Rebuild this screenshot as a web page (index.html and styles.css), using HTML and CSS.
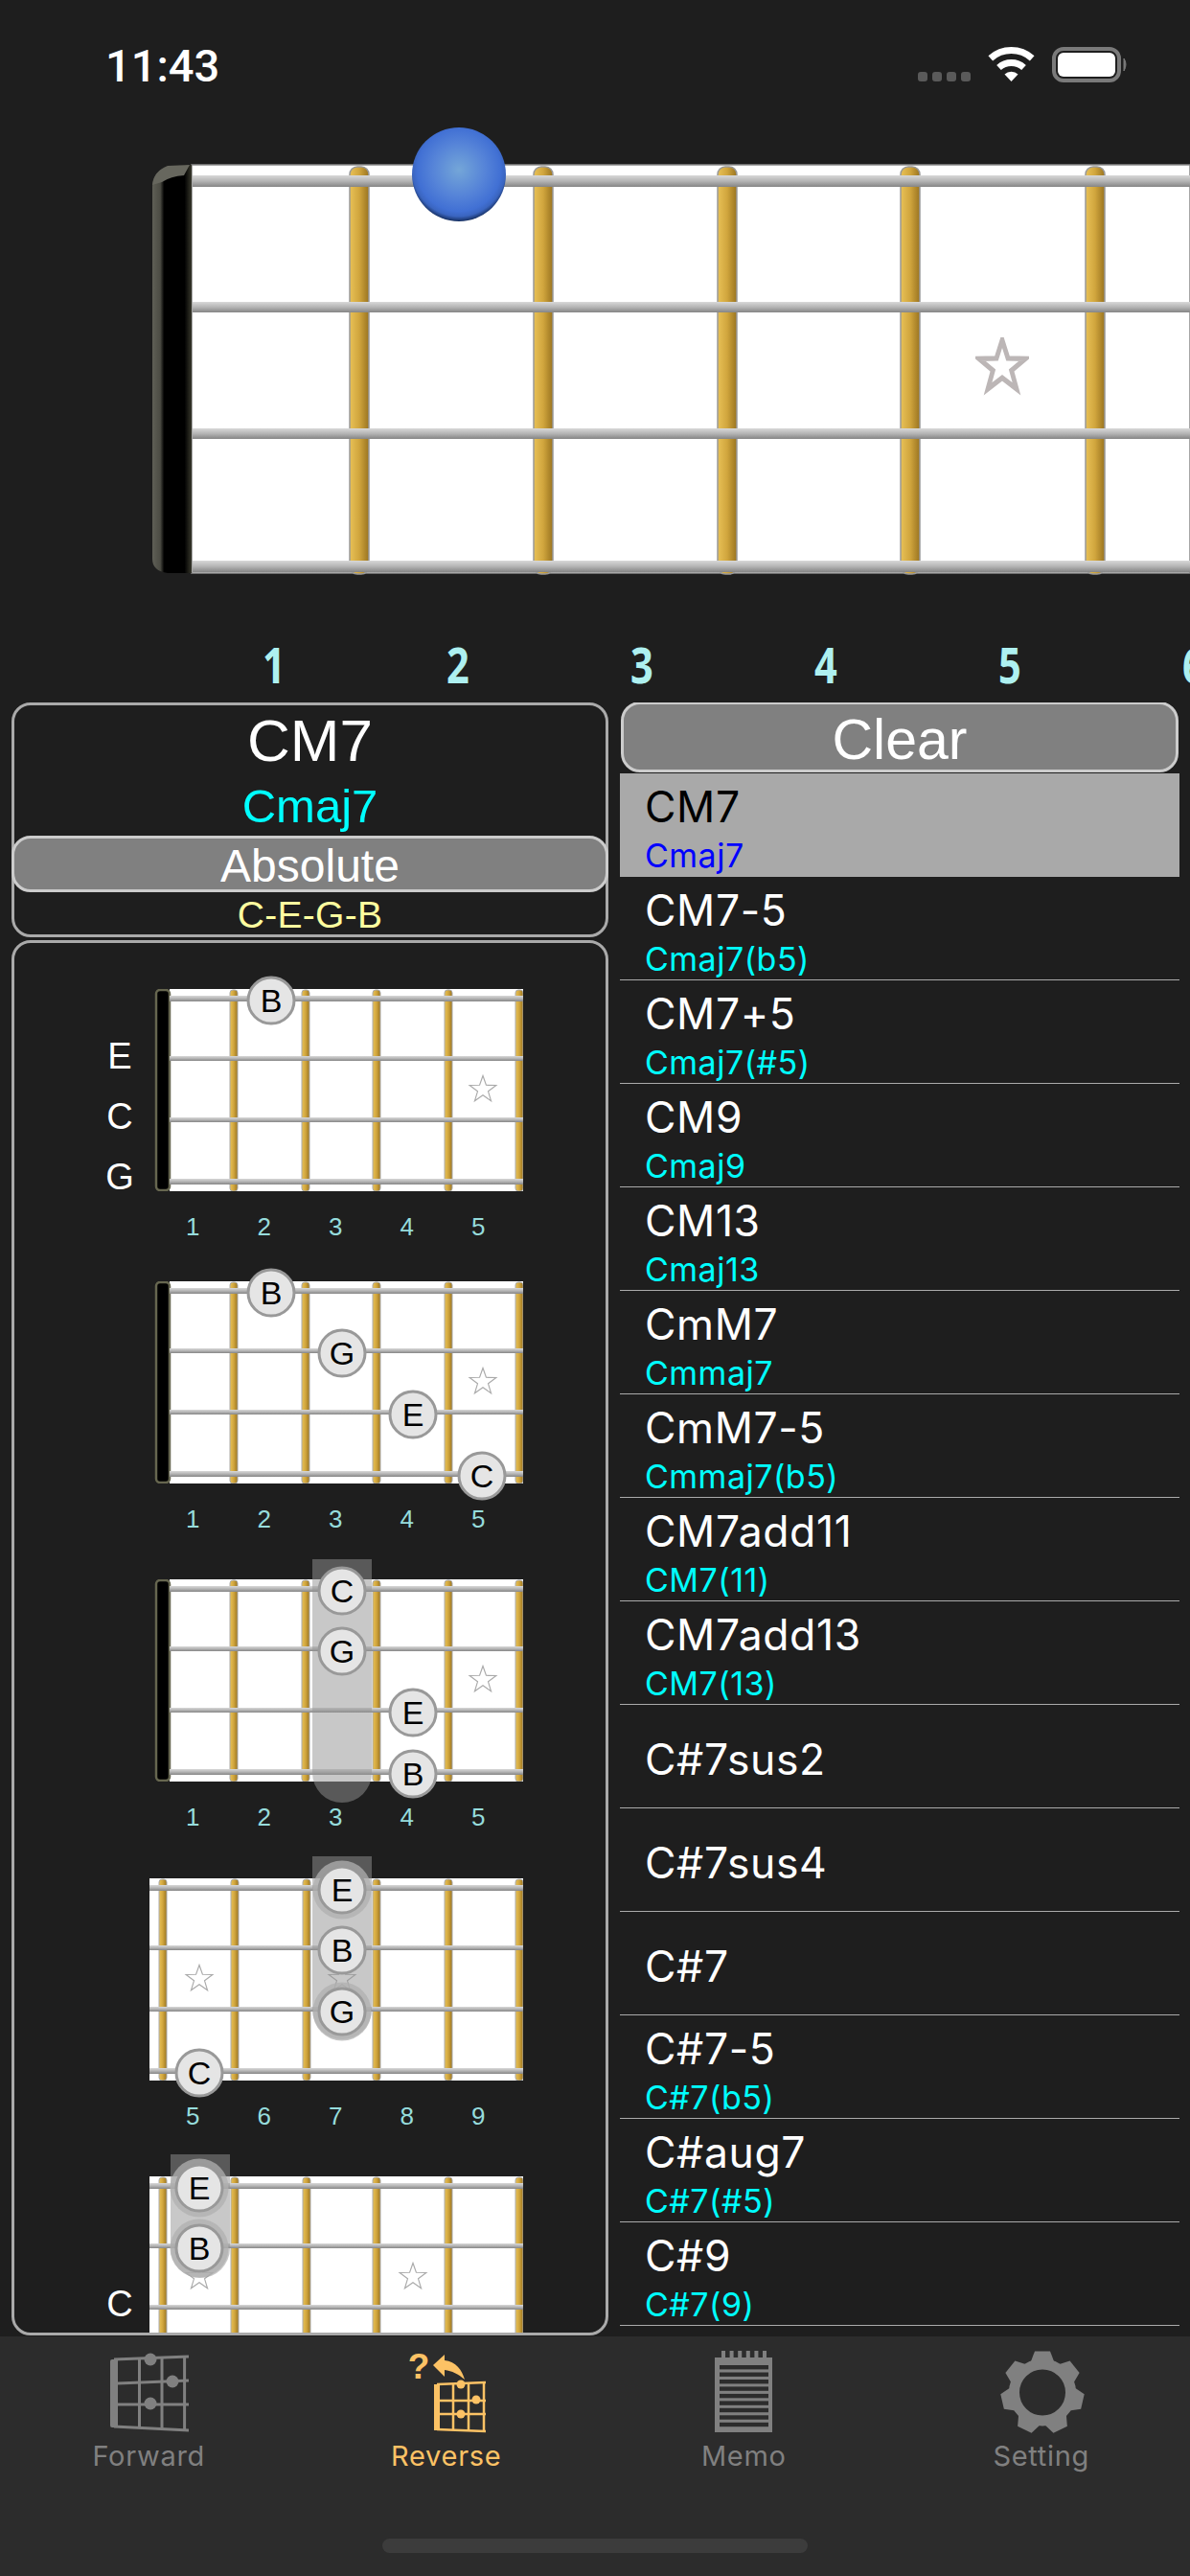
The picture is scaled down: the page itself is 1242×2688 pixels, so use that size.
FILE: index.html
```html
<!DOCTYPE html>
<html lang="en">
<head>
<meta charset="utf-8">
<title>Reverse chord lookup</title>
<link rel="stylesheet" href="styles.css">
</head>
<body>
<svg class="defs" aria-hidden="true">
  <defs>
    <linearGradient id="fretG" x1="0" x2="1" y1="0" y2="0">
      <stop offset="0" stop-color="#e8c157"/><stop offset=".5" stop-color="#d0a53d"/><stop offset="1" stop-color="#9a7420"/>
    </linearGradient>
    <linearGradient id="stringG" x1="0" x2="0" y1="0" y2="1">
      <stop offset="0" stop-color="#d8d8d8"/><stop offset=".5" stop-color="#b4b4b4"/><stop offset="1" stop-color="#858585"/>
    </linearGradient>
    <linearGradient id="nutG" x1="0" x2="1" y1="0" y2="0">
      <stop offset="0" stop-color="#5f5f56"/><stop offset=".2" stop-color="#4c4c44"/><stop offset=".3" stop-color="#000"/><stop offset=".82" stop-color="#000"/><stop offset="1" stop-color="#38382c"/>
    </linearGradient>
    <radialGradient id="ballG" cx=".5" cy=".45" r=".57">
      <stop offset="0" stop-color="#74a6d8"/><stop offset=".5" stop-color="#5583d8"/><stop offset=".78" stop-color="#4170d4"/><stop offset=".87" stop-color="#3a65c0"/><stop offset="1" stop-color="#081a3c"/>
    </radialGradient>
    <symbol id="star" viewBox="-11 -11 22 22" preserveAspectRatio="none">
      <polygon points="0,-10 2.35,-3.24 9.51,-3.09 3.8,1.24 5.88,8.09 0,4 -5.88,8.09 -3.8,1.24 -9.51,-3.09 -2.35,-3.24"/>
    </symbol>
    <symbol id="board-nut" viewBox="0 0 390 211">
      <rect x="21" y="0" width="369" height="211" fill="#fff"/>
      <rect x="7" y="1" width="14" height="209" rx="4" fill="#000" stroke="#66664f" stroke-width="2.5"/>
      <g fill="url(#fretG)" stroke="#aaa" stroke-width="1">
        <rect x="84" y="1" width="8" height="210" rx="3"/>
        <rect x="159" y="1" width="8" height="210" rx="3"/>
        <rect x="233" y="1" width="8" height="210" rx="3"/>
        <rect x="308" y="1" width="8" height="210" rx="3"/>
        <rect x="382" y="1" width="8" height="210" rx="3"/>
      </g>
      <g fill="url(#stringG)">
        <rect x="21" y="7" width="369" height="6"/>
        <rect x="21" y="70" width="369" height="5"/>
        <rect x="21" y="134" width="369" height="5"/>
        <rect x="21" y="198" width="369" height="6"/>
      </g>
    </symbol>
    <symbol id="board-open" viewBox="0 0 390 211">
      <rect x="0" y="0" width="390" height="211" fill="#fff"/>
      <g fill="url(#fretG)" stroke="#aaa" stroke-width="1">
        <rect x="10" y="1" width="8" height="210" rx="3"/>
        <rect x="85" y="1" width="8" height="210" rx="3"/>
        <rect x="160" y="1" width="8" height="210" rx="3"/>
        <rect x="233" y="1" width="8" height="210" rx="3"/>
        <rect x="308" y="1" width="8" height="210" rx="3"/>
        <rect x="382" y="1" width="8" height="210" rx="3"/>
      </g>
      <g fill="url(#stringG)">
        <rect x="0" y="7" width="390" height="6"/>
        <rect x="0" y="70" width="390" height="5"/>
        <rect x="0" y="134" width="390" height="5"/>
        <rect x="0" y="198" width="390" height="6"/>
      </g>
    </symbol>
  </defs>
</svg>

<div class="app">
  <header class="status">
    <span class="time">11:43</span>
    <svg class="status-icons" viewBox="950 45 230 45" width="230" height="45" aria-hidden="true">
      <g fill="#5a5a5a">
        <rect x="958" y="75" width="10" height="10" rx="3"/>
        <rect x="973" y="75" width="10" height="10" rx="3"/>
        <rect x="988" y="75" width="10" height="10" rx="3"/>
        <rect x="1003" y="75" width="10" height="10" rx="3"/>
      </g>
      <g transform="translate(1055.5 85)">
        <g fill="none" stroke="#fff" stroke-width="7">
          <path d="M-21.7 -24.1A32.5 32.5 0 0 1 21.7 -24.1"/>
          <path d="M-13 -14.5A19.5 19.5 0 0 1 13 -14.5"/>
        </g>
        <path d="M0 0L-7 -7.5A10 10 0 0 1 7 -7.5Z" fill="#fff"/>
      </g>
      <rect x="1100" y="51" width="68" height="33" rx="10" fill="none" stroke="#7a7a7a" stroke-width="4"/>
      <rect x="1104" y="55" width="60" height="25" rx="6" fill="#fff"/>
      <path d="M1173 61Q1177 67 1173 74Z" fill="#7a7a7a" stroke="#7a7a7a" stroke-width="1"/>
    </svg>
  </header>

  <svg class="neck" viewBox="0 0 1242 477" width="1242" height="477" aria-hidden="true">
    <rect x="200" y="39" width="1042" height="426" fill="#fff" stroke="#8a8a8a" stroke-width="1.5"/>
    <path d="M159 62Q159 46 175 41L200 39L200 465L175 465Q159 463 159 450Z" fill="url(#nutG)"/>
    <path d="M159 60Q161 45 175 40L198 39L192 50Q178 51 169 57Z" fill="#67675e"/>
    <g fill="url(#fretG)" stroke="#999" stroke-width="1.5">
      <rect x="365" y="41" width="20" height="425" rx="8"/>
      <rect x="557" y="41" width="20" height="425" rx="8"/>
      <rect x="749" y="41" width="20" height="425" rx="8"/>
      <rect x="940" y="41" width="20" height="425" rx="8"/>
      <rect x="1133" y="41" width="20" height="425" rx="8"/>
    </g>
    <g fill="url(#stringG)">
      <rect x="201" y="50" width="1041" height="12"/>
      <rect x="201" y="182" width="1041" height="11"/>
      <rect x="201" y="314" width="1041" height="11"/>
      <rect x="201" y="452" width="1041" height="12"/>
    </g>
    <circle cx="479" cy="49" r="49" fill="url(#ballG)"/>
    <use href="#star" class="big-star" x="1018" y="219" width="56" height="62"/>
  </svg>

  <div class="big-frets">
    <span class="big-fret"><span>1</span></span>
    <span class="big-fret"><span>2</span></span>
    <span class="big-fret"><span>3</span></span>
    <span class="big-fret"><span>4</span></span>
    <span class="big-fret"><span>5</span></span>
    <span class="big-fret"><span>6</span></span>
  </div>

  <main class="main">
    <section class="left">
      <div class="info">
        <div class="info-name">CM7</div>
        <div class="info-alt">Cmaj7</div>
        <div class="info-mode">Absolute</div>
        <div class="info-notes">C-E-G-B</div>
      </div>
      <div class="chords">

        <div class="chord chord-a">
          <div class="chord-row">
            <div class="tuning"><span>E</span><span>C</span><span>G</span></div>
            <div class="board">
              <svg class="board-art"><use href="#board-nut"/></svg>
              <svg class="star c5"><use href="#star"/></svg>
              <span class="dot c2 r1">B</span>
            </div>
          </div>
          <div class="nums"><span>1</span><span>2</span><span>3</span><span>4</span><span>5</span></div>
        </div>

        <div class="chord">
          <div class="chord-row">
            <div class="tuning"></div>
            <div class="board">
              <svg class="board-art"><use href="#board-nut"/></svg>
              <svg class="star c5"><use href="#star"/></svg>
              <span class="dot c2 r1">B</span>
              <span class="dot c3 r2">G</span>
              <span class="dot c4 r3">E</span>
              <span class="dot c5 r4">C</span>
            </div>
          </div>
          <div class="nums"><span>1</span><span>2</span><span>3</span><span>4</span><span>5</span></div>
        </div>

        <div class="chord chord-c">
          <div class="chord-row">
            <div class="tuning"></div>
            <div class="board">
              <svg class="board-art"><use href="#board-nut"/></svg>
              <svg class="star c5"><use href="#star"/></svg>
              <div class="barre barre-long c3-barre"></div>
              <span class="dot c3 r1">C</span>
              <span class="dot c3 r2">G</span>
              <span class="dot c4 r3">E</span>
              <span class="dot c4 r4">B</span>
            </div>
          </div>
          <div class="nums"><span>1</span><span>2</span><span>3</span><span>4</span><span>5</span></div>
        </div>

        <div class="chord">
          <div class="chord-row">
            <div class="tuning"></div>
            <div class="board">
              <svg class="board-art"><use href="#board-open"/></svg>
              <svg class="star c1"><use href="#star"/></svg>
              <svg class="star c3"><use href="#star"/></svg>
              <div class="barre barre-mid c3-barre"></div>
              <span class="dot halo c3 r1">E</span>
              <span class="dot c3 r2">B</span>
              <span class="dot halo c3 r3">G</span>
              <span class="dot c1 r4">C</span>
            </div>
          </div>
          <div class="nums"><span>5</span><span>6</span><span>7</span><span>8</span><span>9</span></div>
        </div>

        <div class="chord">
          <div class="chord-row">
            <div class="tuning"><span></span><span>C</span></div>
            <div class="board">
              <svg class="board-art"><use href="#board-open"/></svg>
              <svg class="star c1"><use href="#star"/></svg>
              <svg class="star c4"><use href="#star"/></svg>
              <div class="barre barre-short c1-barre"></div>
              <span class="dot halo c1 r1">E</span>
              <span class="dot halo c1 r2">B</span>
            </div>
          </div>
        </div>

      </div>
    </section>

    <section class="right">
      <button class="clear" type="button">Clear</button>
      <ul class="list">
        <li class="row selected"><span class="name">CM7</span><span class="alt">Cmaj7</span></li>
        <li class="row"><span class="name">CM7-5</span><span class="alt">Cmaj7(b5)</span></li>
        <li class="row"><span class="name">CM7+5</span><span class="alt">Cmaj7(#5)</span></li>
        <li class="row"><span class="name">CM9</span><span class="alt">Cmaj9</span></li>
        <li class="row"><span class="name">CM13</span><span class="alt">Cmaj13</span></li>
        <li class="row"><span class="name">CmM7</span><span class="alt">Cmmaj7</span></li>
        <li class="row"><span class="name">CmM7-5</span><span class="alt">Cmmaj7(b5)</span></li>
        <li class="row"><span class="name">CM7add11</span><span class="alt">CM7(11)</span></li>
        <li class="row"><span class="name">CM7add13</span><span class="alt">CM7(13)</span></li>
        <li class="row single"><span class="name">C#7sus2</span></li>
        <li class="row single"><span class="name">C#7sus4</span></li>
        <li class="row single"><span class="name">C#7</span></li>
        <li class="row"><span class="name">C#7-5</span><span class="alt">C#7(b5)</span></li>
        <li class="row"><span class="name">C#aug7</span><span class="alt">C#7(#5)</span></li>
        <li class="row"><span class="name">C#9</span><span class="alt">C#7(9)</span></li>
      </ul>
    </section>
  </main>

  <nav class="tabbar">
    <div class="tab">
      <svg class="tab-icon" viewBox="0 0 100 87" width="100" height="87" aria-hidden="true">
        <g fill="none" stroke="currentColor" stroke-width="3">
          <path d="M14 9L92 6M18 34L92 31M18 56L92 56M14 79L92 83"/>
          <path d="M40.5 8V81M64 7V82M87.6 6V83"/>
        </g>
        <path d="M10 11Q10 9 12 9H18V80H12Q10 80 10 78Z" fill="currentColor"/>
        <circle cx="52" cy="9" r="6.5" fill="currentColor"/>
        <circle cx="75" cy="32" r="6.5" fill="currentColor"/>
        <circle cx="52" cy="55" r="6.5" fill="currentColor"/>
      </svg>
      <span class="tab-label">Forward</span>
    </div>
    <div class="tab active">
      <svg class="tab-icon" viewBox="0 0 100 87" width="100" height="87" aria-hidden="true">
        <text class="q-mark" x="21" y="29">?</text>
        <path d="M36 15L48 4L48 10C60 11 66 20 69 30C62 24 56 21 48 20L48 27Z" fill="currentColor"/>
        <g fill="none" stroke="currentColor" stroke-width="2.5">
          <path d="M40 35L91 33M43 52L91 52M43 66L91 66M40 82L91 84"/>
          <path d="M57 34V83M73 34V83M89 33V84"/>
        </g>
        <rect x="37" y="35" width="6" height="48" fill="currentColor"/>
        <circle cx="65" cy="35" r="4.5" fill="currentColor"/>
        <circle cx="81" cy="51" r="4.5" fill="currentColor"/>
        <circle cx="65" cy="66" r="4.5" fill="currentColor"/>
      </svg>
      <span class="tab-label">Reverse</span>
    </div>
    <div class="tab">
      <svg class="tab-icon" viewBox="0 0 100 87" width="100" height="87" aria-hidden="true">
        <g fill="currentColor">
          <rect x="20" y="7" width="60" height="78"/>
          <rect x="27" y="0" width="4" height="8"/><rect x="35.6" y="0" width="4" height="8"/><rect x="44.2" y="0" width="4" height="8"/>
          <rect x="52.8" y="0" width="4" height="8"/><rect x="61.4" y="0" width="4" height="8"/><rect x="70" y="0" width="4" height="8"/>
        </g>
        <g fill="#2c2c2c">
          <rect x="25" y="15" width="51" height="4.4"/><rect x="25" y="22.5" width="51" height="4.4"/><rect x="25" y="30" width="51" height="4.4"/>
          <rect x="25" y="37.4" width="51" height="4.4"/><rect x="25" y="44.9" width="51" height="4.4"/><rect x="25" y="52.4" width="51" height="4.4"/>
          <rect x="25" y="59.8" width="51" height="4.4"/><rect x="25" y="67.3" width="51" height="4.4"/><rect x="25" y="74.8" width="51" height="4.4"/>
        </g>
      </svg>
      <span class="tab-label">Memo</span>
    </div>
    <div class="tab">
      <svg class="tab-icon" viewBox="0 0 100 87" width="100" height="87" aria-hidden="true">
        <g transform="translate(51 43.5)" fill="currentColor">
          <circle r="29.5" fill="none" stroke="currentColor" stroke-width="11"/>
          <polygon points="-13,-30 -8,-43 8,-43 13,-30"/>
          <polygon points="-13,-30 -8,-43 8,-43 13,-30" transform="rotate(51.43)"/>
          <polygon points="-13,-30 -8,-43 8,-43 13,-30" transform="rotate(102.86)"/>
          <polygon points="-13,-30 -8,-43 8,-43 13,-30" transform="rotate(154.29)"/>
          <polygon points="-13,-30 -8,-43 8,-43 13,-30" transform="rotate(205.71)"/>
          <polygon points="-13,-30 -8,-43 8,-43 13,-30" transform="rotate(257.14)"/>
          <polygon points="-13,-30 -8,-43 8,-43 13,-30" transform="rotate(308.57)"/>
        </g>
      </svg>
      <span class="tab-label">Setting</span>
    </div>
    <div class="home-indicator"></div>
  </nav>
</div>
</body>
</html>
```

FILE: styles.css
```css
* { box-sizing: border-box; }

html, body {
  margin: 0;
  padding: 0;
  width: 1242px;
  height: 2688px;
  overflow: hidden;
  background: #1e1e1e;
  font-family: "Liberation Sans", Arial, sans-serif;
  color: #fff;
}

.defs { position: absolute; width: 0; height: 0; }

.app {
  display: flex;
  flex-direction: column;
  width: 1242px;
  height: 2688px;
  overflow: hidden;
}

/* Status bar */
.status {
  display: flex;
  align-items: flex-start;
  justify-content: space-between;
  height: 133px;
  flex: none;
}
.time {
  margin: 44px 0 0 110px;
  font-family: Roboto, sans-serif;
  font-size: 47px;
  font-weight: 500;
  line-height: 50px;
}
.status-icons { margin: 45px 62px 0 0; display: block; }

/* Large neck */
.neck { display: block; flex: none; }
.big-star { fill: #fff; stroke: #bcb6b6; stroke-width: 1.9; }

.big-frets {
  display: flex;
  flex: none;
  height: 123px;
  padding: 48px 0 0 190px;
  width: 1500px;
}
.big-fret {
  flex: none;
  width: 192px;
  height: 70px;
  text-align: center;
  font-family: "Open Sans", sans-serif;
  font-weight: 700;
  font-size: 52px;
  line-height: 70px;
  color: #aef0f0;
}
.big-fret span { display: inline-block; transform: scaleX(.8); }

/* Main two-column area */
.main {
  display: grid;
  grid-template-columns: 623px 584px;
  column-gap: 12px;
  padding-left: 12px;
  height: 1705px;
  flex: none;
  overflow: hidden;
}
.left { display: flex; flex-direction: column; gap: 3px; min-height: 0; }

.info {
  height: 245px;
  flex: none;
  border: 3px solid #aaa;
  border-radius: 20px;
  text-align: center;
}
.info-name { font-size: 62px; line-height: 74px; }
.info-alt { font-size: 49px; line-height: 62px; color: #0ff; }
.info-mode {
  margin: 0 -3px;
  height: 59px;
  border: 3px solid #ccc;
  border-radius: 20px;
  background: #808080;
  font-size: 48px;
  line-height: 57px;
}
.info-notes { padding-top: 4px; font-size: 39px; line-height: 40px; color: #ffff9f; letter-spacing: .3px; }

.chords {
  flex: none;
  height: 1456px;
  border: 3px solid #aaa;
  border-radius: 20px;
  padding-top: 48px;
  overflow: hidden;
}
.chord { height: 311px; }
.chord-a { height: 305px; }
.chord-c { height: 312px; }
.chord-row { display: flex; align-items: flex-start; }

.tuning {
  flex: none;
  width: 62px;
  height: 211px;
  margin-left: 79px;
  padding-top: 39px;
  text-align: center;
  font-size: 38px;
  line-height: 63px;
}
.tuning span { display: block; height: 63px; }

.board { position: relative; flex: none; width: 390px; height: 211px; }
.board-art { display: block; width: 390px; height: 211px; overflow: visible; }

.star {
  position: absolute;
  top: 105px;
  width: 32px;
  height: 32px;
  transform: translate(-50%, -50%);
  fill: #fff;
  stroke: #aaa;
  stroke-width: .8;
}
.dot {
  position: absolute;
  width: 51px;
  height: 51px;
  transform: translate(-50%, -50%);
  border-radius: 50%;
  border: 3px solid #999;
  background: #e5e5e5;
  color: #000;
  font-size: 34px;
  line-height: 45px;
  text-align: center;
}
.halo { box-shadow: 0 0 0 5px rgba(176, 176, 176, .75); }

.c1 { left: 52px; }
.c2 { left: 127px; }
.c3 { left: 201px; }
.c4 { left: 275px; }
.c5 { left: 348px; }
.dot.c5 { left: 347px; }
.r1 { top: 12px; }
.r2 { top: 75px; }
.r3 { top: 139px; }
.r4 { top: 203px; }

.barre {
  position: absolute;
  width: 62px;
  background: rgba(147, 147, 147, .51);
  border-radius: 0 0 31px 31px;
}
.c3-barre { left: 170px; }
.c1-barre { left: 22px; }
.barre-long { top: -21px; height: 254px; }
.barre-mid { top: -23px; height: 191px; }
.barre-short { top: -23px; height: 129px; }

.nums {
  display: flex;
  margin: 15px 0 0 149px;
  font-size: 26px;
  line-height: 44px;
  color: #96dcdc;
}
.nums span { flex: none; width: 74.5px; text-align: center; }

/* Right column */
.right { display: flex; flex-direction: column; min-height: 0; }
.clear {
  flex: none;
  margin: -1px 1px 0;
  height: 74px;
  padding: 5px 0 0;
  border: 3px solid #ccc;
  border-radius: 20px;
  background: #808080;
  color: #fff;
  font-family: inherit;
  font-size: 59px;
  line-height: 62px;
}
.list { list-style: none; margin: 1px 0 0; padding: 0; }
.row {
  display: flex;
  flex-direction: column;
  height: 108px;
  padding: 0 0 0 26px;
  border-bottom: 1px solid #aaa;
  white-space: nowrap;
  font-family: Inter, "Liberation Sans", sans-serif;
}
.row.single { padding-top: 22px; }
.name { font-size: 44.5px; line-height: 70px; letter-spacing: .6px; }
.alt { font-size: 34px; line-height: 31px; letter-spacing: .5px; color: #0ff; }
.selected { background: #a9a9a9; border-bottom: 0; color: #000; }
.selected .alt { color: #00f; }

/* Tab bar */
.tabbar {
  position: relative;
  display: grid;
  grid-template-columns: repeat(4, 1fr);
  flex: none;
  height: 250px;
  padding-top: 15px;
  background: #2c2c2c;
  color: #808080;
}
.tab {
  display: flex;
  flex-direction: column;
  align-items: center;
}
.tab.active { color: #fcc265; }
.tab-icon { display: block; flex: none; overflow: visible; }
.tab-label {
  margin-top: 6px;
  font-family: Inter, sans-serif;
  font-size: 29px;
  line-height: 34px;
  letter-spacing: .7px;
}
.q-mark {
  font-family: "Liberation Sans", sans-serif;
  font-weight: 700;
  font-size: 37px;
  text-anchor: middle;
  fill: currentColor;
}
.home-indicator {
  position: absolute;
  left: 399px;
  top: 211px;
  width: 444px;
  height: 15px;
  border-radius: 8px;
  background: #3c3c3c;
}
```
